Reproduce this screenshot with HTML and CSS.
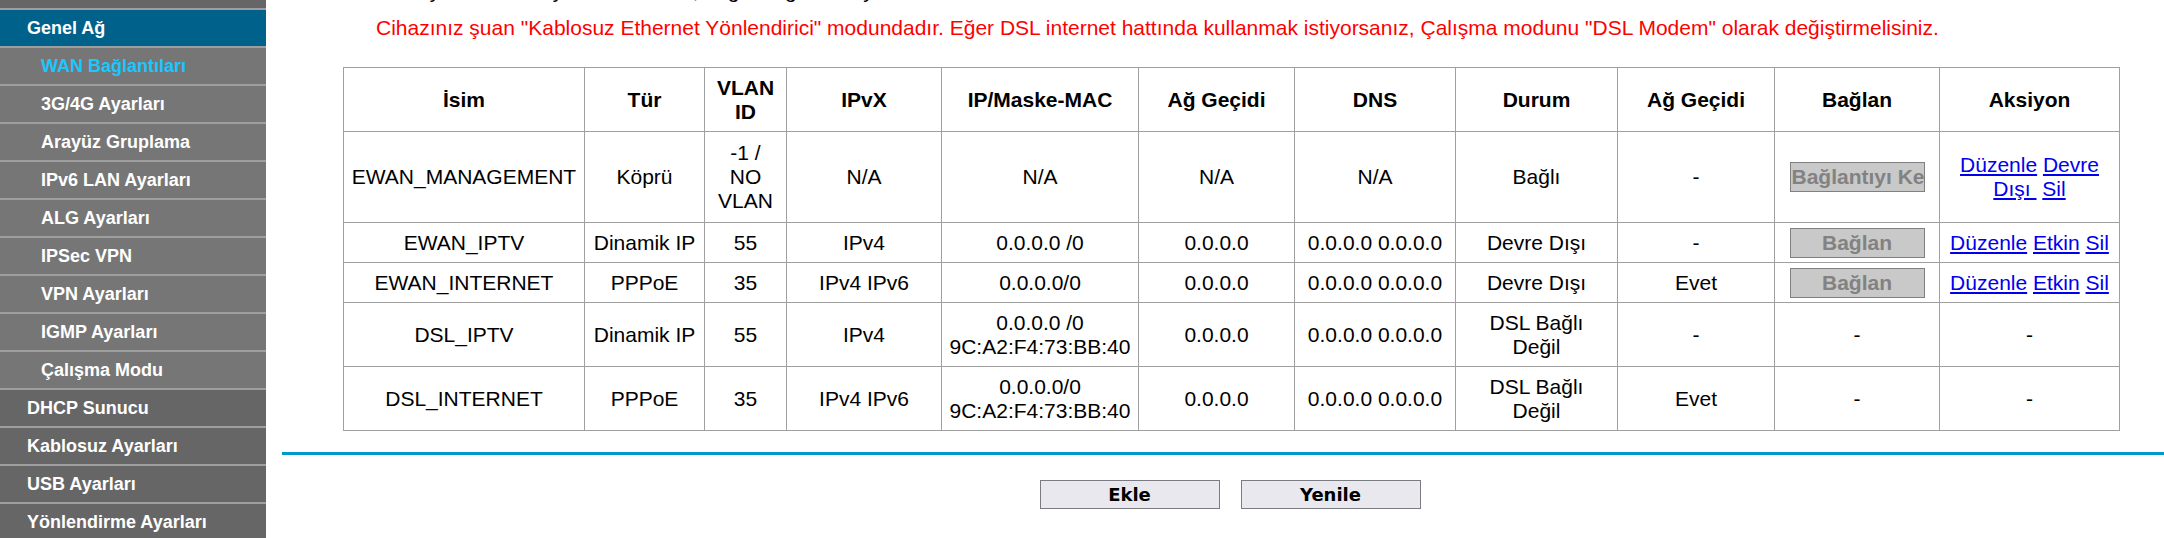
FILE: index.html
```html
<!DOCTYPE html>
<html lang="tr">
<head>
    <meta charset="UTF-8">
    <meta name="viewport" content="width=device-width, initial-scale=1.0">
    <title>WAN Bağlantıları</title>
    <link rel="stylesheet" href="styles.css">
</head>
<body>
<div class="page">
    <nav class="menu">
        <a class="menu-item" href="#">Durum</a>
        <a class="menu-item active" href="#">Genel Ağ</a>
        <a class="menu-item sub current" href="#">WAN Bağlantıları</a>
        <a class="menu-item sub" href="#">3G/4G Ayarları</a>
        <a class="menu-item sub" href="#">Arayüz Gruplama</a>
        <a class="menu-item sub" href="#">IPv6 LAN Ayarları</a>
        <a class="menu-item sub" href="#">ALG Ayarları</a>
        <a class="menu-item sub" href="#">IPSec VPN</a>
        <a class="menu-item sub" href="#">VPN Ayarları</a>
        <a class="menu-item sub" href="#">IGMP Ayarları</a>
        <a class="menu-item sub" href="#">Çalışma Modu</a>
        <a class="menu-item" href="#">DHCP Sunucu</a>
        <a class="menu-item" href="#">Kablosuz Ayarları</a>
        <a class="menu-item" href="#">USB Ayarları</a>
        <a class="menu-item" href="#">Yönlendirme Ayarları</a>
    </nav>

    <main class="content">
        <p class="intro">Bu sayfada WAN ayarları listelenir, bağlantı güncelleyebilirsiniz.</p>
        <p class="notice">Cihazınız şuan "Kablosuz Ethernet Yönlendirici" modundadır. Eğer DSL internet hattında kullanmak istiyorsanız, Çalışma modunu "DSL Modem" olarak değiştirmelisiniz.</p>

        <table class="wan-table">
            <colgroup>
                <col style="width:241px">
                <col style="width:120px">
                <col style="width:82px">
                <col style="width:155px">
                <col style="width:197px">
                <col style="width:156px">
                <col style="width:161px">
                <col style="width:162px">
                <col style="width:157px">
                <col style="width:165px">
                <col style="width:180px">
            </colgroup>
            <tr class="row-head">
                <th>İsim</th>
                <th>Tür</th>
                <th>VLAN ID</th>
                <th>IPvX</th>
                <th>IP/Maske-MAC</th>
                <th>Ağ Geçidi</th>
                <th>DNS</th>
                <th>Durum</th>
                <th>Ağ Geçidi</th>
                <th>Bağlan</th>
                <th>Aksiyon</th>
            </tr>
            <tr class="row-tall">
                <td>EWAN_MANAGEMENT</td>
                <td>Köprü</td>
                <td>-1 /<br>NO VLAN</td>
                <td>N/A</td>
                <td>N/A</td>
                <td>N/A</td>
                <td>N/A</td>
                <td>Bağlı</td>
                <td>-</td>
                <td class="btn-cell"><button class="conn clip" disabled>Bağlantıyı Kes</button></td>
                <td><a href="#">Düzenle</a> <a href="#">Devre Dışı&nbsp;</a> <a href="#">Sil</a></td>
            </tr>
            <tr class="row-small">
                <td>EWAN_IPTV</td>
                <td>Dinamik IP</td>
                <td>55</td>
                <td>IPv4</td>
                <td>0.0.0.0 /0</td>
                <td>0.0.0.0</td>
                <td>0.0.0.0 0.0.0.0</td>
                <td>Devre Dışı</td>
                <td>-</td>
                <td class="btn-cell"><button class="conn" disabled>Bağlan</button></td>
                <td><a href="#">Düzenle</a> <a href="#">Etkin</a> <a href="#">Sil</a></td>
            </tr>
            <tr class="row-small">
                <td>EWAN_INTERNET</td>
                <td>PPPoE</td>
                <td>35</td>
                <td>IPv4 IPv6</td>
                <td>0.0.0.0/0</td>
                <td>0.0.0.0</td>
                <td>0.0.0.0 0.0.0.0</td>
                <td>Devre Dışı</td>
                <td>Evet</td>
                <td class="btn-cell"><button class="conn" disabled>Bağlan</button></td>
                <td><a href="#">Düzenle</a> <a href="#">Etkin</a> <a href="#">Sil</a></td>
            </tr>
            <tr class="row-mid">
                <td>DSL_IPTV</td>
                <td>Dinamik IP</td>
                <td>55</td>
                <td>IPv4</td>
                <td>0.0.0.0 /0<br>9C:A2:F4:73:BB:40</td>
                <td>0.0.0.0</td>
                <td>0.0.0.0 0.0.0.0</td>
                <td>DSL Bağlı<br>Değil</td>
                <td>-</td>
                <td>-</td>
                <td>-</td>
            </tr>
            <tr class="row-mid">
                <td>DSL_INTERNET</td>
                <td>PPPoE</td>
                <td>35</td>
                <td>IPv4 IPv6</td>
                <td>0.0.0.0/0<br>9C:A2:F4:73:BB:40</td>
                <td>0.0.0.0</td>
                <td>0.0.0.0 0.0.0.0</td>
                <td>DSL Bağlı<br>Değil</td>
                <td>Evet</td>
                <td>-</td>
                <td>-</td>
            </tr>
        </table>

        <hr class="divider">

        <div class="actions">
            <button class="action-btn">Ekle</button>
            <button class="action-btn">Yenile</button>
        </div>
    </main>
</div>
</body>
</html>
```

FILE: styles.css
```css
body {
    margin: 0;
    font-family: "Liberation Sans", Arial, sans-serif;
    background: #ffffff;
    overflow: hidden;
}

.page {
    display: flex;
    height: 538px;
}

/* left menu */
.menu {
    width: 266px;
    flex: none;
    display: flex;
    flex-direction: column;
    background: #666666;
    overflow: hidden;
}

.menu-item {
    display: block;
    flex: none;
    height: 36px;
    line-height: 36px;
    padding-left: 27px;
    border-bottom: 2px solid #9e9e9e;
    background: #666666;
    color: #ffffff;
    font-size: 18px;
    font-weight: bold;
    text-decoration: none;
    white-space: nowrap;
}

.menu-item:first-child {
    margin-top: -28px;
}

.menu-item.sub {
    padding-left: 41px;
    background: #767676;
}

.menu-item.active {
    background: #00628b;
}

.menu-item.current {
    color: #1cc6ff;
}

/* page body */
.content {
    flex: 1;
    min-width: 0;
    padding-left: 16px;
}

.intro,
.notice {
    margin: 0 0 0 94px;
    font-size: 21px;
    white-space: nowrap;
}

.intro {
    margin-top: -21px;
    color: #000000;
}

.notice {
    margin-top: 13px;
    color: #ff0000;
}

.wan-table {
    margin: 27px 0 0 61px;
    width: 1776px;
    table-layout: fixed;
    border-collapse: collapse;
    font-size: 21px;
    color: #000000;
}

.wan-table th,
.wan-table td {
    border: 1px solid #a0a0a0;
    padding: 4px;
    text-align: center;
    vertical-align: middle;
}

.wan-table th {
    font-weight: bold;
}

.row-head { height: 64px; }
.row-tall { height: 91px; }
.row-small { height: 40px; }
.row-mid { height: 64px; }

.wan-table a {
    color: #0000ee;
    text-decoration: underline;
}

.btn-cell {
    padding: 4px 2px;
}

.conn {
    display: block;
    margin: 0 auto;
    width: 135px;
    height: 30px;
    padding: 0 1px;
    background: #c9c9c9;
    border: 1px solid #808080;
    color: #828282;
    font-family: "Liberation Sans", Arial, sans-serif;
    font-size: 21px;
    font-weight: bold;
    white-space: nowrap;
    overflow: hidden;
}

.conn.clip {
    text-align: left;
}

.divider {
    margin: 21px 0 0;
    height: 3px;
    border: 0;
    background: #0099cc;
}

.actions {
    display: flex;
    justify-content: center;
    gap: 21px;
    margin-top: 25px;
    padding-left: 14px;
}

.action-btn {
    width: 180px;
    height: 29px;
    padding: 0;
    background: #e9e8ee;
    border: 1px solid #7b7b84;
    color: #000000;
    font-family: "DejaVu Sans", Verdana, sans-serif;
    font-size: 18px;
    font-weight: bold;
}
```
